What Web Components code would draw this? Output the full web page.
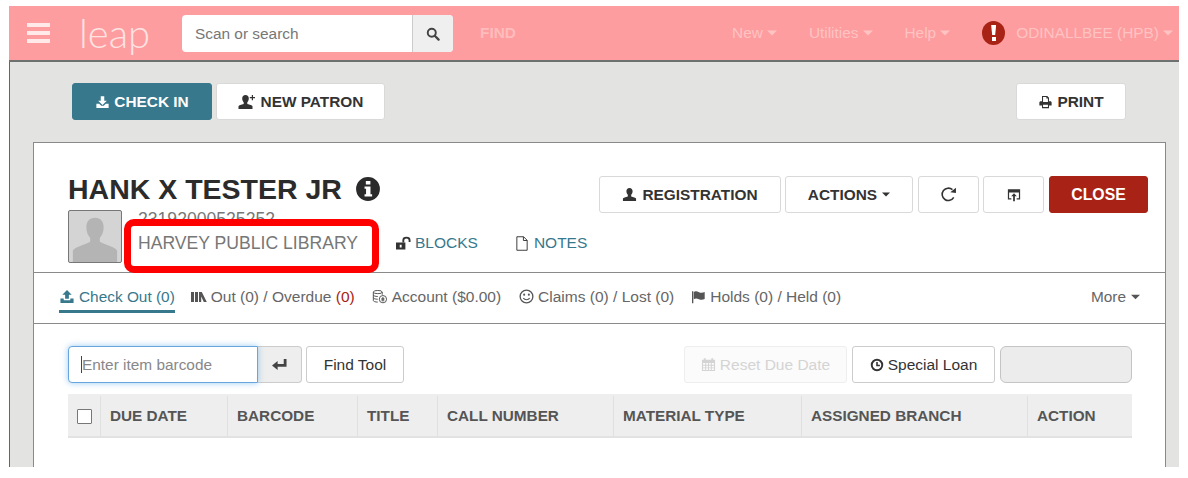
<!DOCTYPE html>
<html>
<head>
<meta charset="utf-8">
<title>leap</title>
<style>
  html, body { margin: 0; padding: 0; background: #fff; overflow: hidden; }
  body { font-family: "Liberation Sans", Arial, sans-serif; color: #333; }
</style>
</head>
<body>
<leap-app>
  <leap-navbar slot="nav"></leap-navbar>
  <leap-toolbar slot="toolbar"></leap-toolbar>
  <patron-card slot="card">
    <patron-header></patron-header>
    <patron-tabs></patron-tabs>
    <checkout-panel></checkout-panel>
  </patron-card>
</leap-app>

<script>
const ICONS = {
  search: '<svg viewBox="0 0 16 16"><circle cx="6.6" cy="6.6" r="4.6" fill="none" stroke="currentColor" stroke-width="2.2"/><path d="M10 10l4.4 4.4" stroke="currentColor" stroke-width="2.6" stroke-linecap="round"/></svg>',
  download: '<svg viewBox="0 0 16 16"><path fill="currentColor" d="M6 1.5h4v5h3L8 11.3 3 6.5h3z"/><path fill="currentColor" d="M1 10h3.2L6.6 12.400h2.800L11.800 10H15v4.800H1z"/></svg>',
  upload: '<svg viewBox="0 0 16 16"><path fill="currentColor" d="M8 1l5 5h-3v4.500H6V6H3z"/><path fill="currentColor" d="M1 10h3.500v2h7v-2H15v5H1z"/></svg>',
  user: '<svg viewBox="0 0 16 16"><path fill="currentColor" d="M8 1c2.100 0 3.300 1.500 3.300 3.500 0 1.500-.6 2.900-1.500 3.700v1.800c2.300.7 5 1.200 5.200 2.300V15H1v-2.700c.2-1.100 2.900-1.600 5.200-2.300V8.200C5.300 7.400 4.700 6 4.700 4.500 4.700 2.500 5.900 1 8 1z"/></svg>',
  userplus: '<svg viewBox="0 0 18 16"><path fill="currentColor" d="M7.500 1c2.100 0 3.300 1.500 3.300 3.500 0 1.500-.6 2.900-1.500 3.700v1.800c2.300.7 5 1.200 5.200 2.300V15H.5v-2.700c.2-1.100 2.900-1.600 5.200-2.300V8.200C4.800 7.400 4.200 6 4.200 4.500 4.200 2.500 5.400 1 7.500 1z"/><path fill="currentColor" d="M13.800 1h1.200v2h2v1.200h-2v2h-1.200v-2h-2V3h2z"/></svg>',
  print: '<svg viewBox="0 0 16 16"><path fill="currentColor" fill-rule="evenodd" d="M4 1h6l2 2v4h1.500c.8 0 1.500.7 1.500 1.500V12h-3v3H4v-3H1V8.500C1 7.700 1.700 7 2.500 7H4zM5.200 2.200V8h5.600V4H9V2.200zM5.200 11v2.800h5.600V11z"/></svg>',
  info: '<svg viewBox="0 0 24 24"><path fill="currentColor" fill-rule="evenodd" d="M12 1a11 11 0 1 1 0 22 11 11 0 0 1 0-22zM10 4.500v3.300h4.200V4.500zM8.800 9.800v2h1.400v5.100H8.800V19h7v-2.100h-1.500V9.800z"/></svg>',
  lockopen: '<svg viewBox="0 0 16 14"><path fill="currentColor" fill-rule="evenodd" d="M0 6.500h10V14H0zM4 8.800v3h2v-3z"/><path fill="none" stroke="currentColor" stroke-width="2" d="M7.800 6.500V4c0-3.600 6.700-3.600 6.700 0v2"/></svg>',
  file: '<svg viewBox="0 0 14 16"><path fill="none" stroke="currentColor" stroke-width="1" d="M1.500.8h7.200l3.800 3.800v10.600h-11zM8.500 .8v4h4"/></svg>',
  books: '<svg viewBox="0 0 16 12"><path fill="currentColor" d="M0 1h3v10H0zM4 1h3v10H4zM8 1h2.800l5 10h-3l-2.600-5.500V11H8z"/></svg>',
  coins: '<svg viewBox="0 0 18 16"><g fill="none" stroke="currentColor" stroke-width="1.100"><ellipse cx="6.500" cy="3" rx="5" ry="1.800"/><path d="M1.500 3v9.500c0 1 2.200 1.800 5 1.800M11.500 3v3M1.500 6.200c0 1 2.200 1.800 5 1.800M1.500 9.300c0 1 2.200 1.800 5 1.800"/><circle cx="12.300" cy="11" r="4.100"/></g><path fill="currentColor" d="M11.700 8.500h1.200v5h-1.200zM10.500 10h3.400v1h-3.400zM10.500 11.500h3.400v1h-3.400z"/></svg>',
  smile: '<svg viewBox="0 0 16 16"><circle cx="8" cy="8" r="6.800" fill="none" stroke="currentColor" stroke-width="1.400"/><circle cx="5.500" cy="6" r="1.100" fill="currentColor"/><circle cx="10.500" cy="6" r="1.100" fill="currentColor"/><path d="M4.600 9.800c1.600 2.200 5.200 2.200 6.800 0" fill="none" stroke="currentColor" stroke-width="1.300"/></svg>',
  flag: '<svg viewBox="0 0 18 16"><path fill="currentColor" d="M1 1.500h1.500V15H1z"/><path fill="currentColor" d="M3 2.300c2-1.400 4-.6 6 .2s4 1 6.500-.2v8c-2.500 1.200-4.500 1-6.500.2s-4-1.300-6 0z"/></svg>',
  calendar: '<svg viewBox="0 0 16 16"><path fill="currentColor" fill-rule="evenodd" d="M1 3h2V1.200h2V3h6V1.200h2V3h2v12H1zM2.200 6.500v1.800h2.300V6.500zM5.500 6.500v1.800h2V6.500zM8.500 6.500v1.800h2V6.500zM11.500 6.500v1.800h2.300V6.500zM2.200 9.300v1.800h2.300V9.300zM5.500 9.300v1.800h2V9.300zM8.500 9.300v1.800h2V9.300zM11.500 9.300v1.800h2.300V9.300zM2.200 12.100v1.700h2.300v-1.700zM5.500 12.100v1.700h2v-1.700zM8.500 12.100v1.700h2v-1.700zM11.500 12.100v1.700h2.300v-1.700z"/></svg>',
  clock: '<svg viewBox="0 0 16 16"><circle cx="8" cy="8" r="6" fill="none" stroke="currentColor" stroke-width="2.200"/><path d="M8 4.500V8.500H11.300" fill="none" stroke="currentColor" stroke-width="1.800"/></svg>',
  enter: '<svg viewBox="0 0 18 16"><path fill="currentColor" d="M13.500 2h3v8.500H7v3.300L1 9l6-4.800v3.300h6.500z"/></svg>',
  refresh: '<svg viewBox="0 0 16 16"><path fill="none" stroke="currentColor" stroke-width="1.500" d="M12.900 10.700A5.800 5.800 0 1 1 11.700 3.500"/><path fill="currentColor" d="M9.700 5.800L15 1.600v5z"/></svg>',
  popout: '<svg viewBox="0 0 16 16"><path fill="currentColor" fill-rule="evenodd" d="M1 1.500h14V13h-4v-1.400h2.600V5H2.400v6.600H5V13H1z"/><path fill="currentColor" d="M8 6l3.200 3.300H9V15H7V9.300H4.800z"/></svg>',
  caret: '<svg viewBox="0 0 10 6"><path fill="currentColor" d="M0 .5h10L5 5.500z"/></svg>'
};

customElements.define("leap-icon", class extends HTMLElement {
  connectedCallback() {
    if (!this.shadowRoot) {
      this.attachShadow({ mode: "open" });
      const w = this.getAttribute("w") || 14;
      const h = this.getAttribute("h") || 14;
      this.shadowRoot.innerHTML = `
        <style>
          :host { display: inline-flex; width: ${w}px; height: ${h}px; flex: none; }
          svg { display: block; width: 100%; height: 100%; }
        </style>
        ${ICONS[this.getAttribute("name")] || ""}
      `;
    }
  }
});

customElements.define("leap-btn", class extends HTMLElement {
  constructor() {
    super();
    this.attachShadow({ mode: "open" });
    this.shadowRoot.innerHTML = `
      <style>
        :host {
          display: inline-flex; align-items: center; justify-content: center; gap: 4px;
          box-sizing: border-box; height: 37px; flex: none;
          background: #fff; border: 1px solid #d9d9d9; border-radius: 3px;
          color: #333; font-size: 15.400px; font-weight: bold; white-space: nowrap;
        }
        :host([variant=teal]) { background: #37788c; border-color: #37788c; color: #fff; }
        :host([variant=red]) { background: #a82315; border-color: #a82315; color: #fff; }
        :host([variant=plain]) { font-weight: normal; font-size: 15.500px; border-color: #ccc; }
        :host([variant=disabled]) { font-weight: normal; font-size: 15.500px; color: #d4d4d4; border-color: #eee; background: #fbfbfb; }
        :host([variant=blank]) { background: #ececec; border-color: #c4c4c4; border-radius: 6px; }
      </style>
      <slot></slot>
    `;
  }
});

customElements.define("leap-navbar", class extends HTMLElement {
  constructor() {
    super();
    this.attachShadow({ mode: "open" });
    this.shadowRoot.innerHTML = `
      <style>
        :host {
          display: flex; align-items: center; box-sizing: border-box; height: 56px;
          background: #fe9d9f; border-bottom: 2px solid #6f7070; color: #ffc3c3;
          font-size: 15.400px;
        }
        .burger { display: flex; flex-direction: column; gap: 4px; width: 23px; margin-left: 18px; }
        .burger i { display: block; height: 4px; background: #ffe9e9; }
        .logo { margin-left: 29px; width: 73px; font: 300 40px Lato, sans-serif; color: #ffe3e3; line-height: 40px; }
        .search { display: flex; height: 37px; margin: 1px 0 0 30px; width: 271px; background: #fff; border-radius: 4px; overflow: hidden; box-sizing: border-box; }
        .search .field { flex: 1; display: flex; align-items: center; padding-left: 13px; color: #777; font-size: 15.400px; }
        .search .go { width: 40px; background: #efefef; border-left: 1px solid #ccc; display: flex; align-items: center; justify-content: center; color: #444; }
        .find { margin-left: 27px; font-weight: bold; font-size: 15.400px; color: #ffbcbc; }
        .right { margin-left: auto; display: flex; align-items: center; padding-right: 6px; }
        .menu { display: flex; align-items: center; gap: 4px; margin-left: 32px; }
        .alert { width: 23px; height: 24px; border-radius: 50%; background: #a82315; position: relative; margin-left: 32px; margin-right: 11px; }
        .alert::before { content: ""; position: absolute; left: 9px; top: 4px; width: 5px; height: 10px; background: #fff; clip-path: polygon(0 0, 100% 0, 80% 100%, 20% 100%); }
        .alert::after { content: ""; position: absolute; left: 9.500px; top: 16px; width: 4px; height: 4px; background: #fff; }
        .user { display: flex; align-items: center; gap: 4px; }
      </style>
      <div class="burger"><i></i><i></i><i></i></div>
      <div class="logo">leap</div>
      <div class="search">
        <div class="field">Scan or search</div>
        <div class="go"><leap-icon name="search" w="14" h="14"></leap-icon></div>
      </div>
      <div class="find">FIND</div>
      <div class="right">
        <div class="menu">New <leap-icon name="caret" w="10" h="6"></leap-icon></div>
        <div class="menu">Utilities <leap-icon name="caret" w="10" h="6"></leap-icon></div>
        <div class="menu">Help <leap-icon name="caret" w="10" h="6"></leap-icon></div>
        <div class="alert"></div>
        <div class="user">ODINALLBEE (HPB) <leap-icon name="caret" w="10" h="6"></leap-icon></div>
      </div>
    `;
  }
});

customElements.define("leap-toolbar", class extends HTMLElement {
  constructor() {
    super();
    this.attachShadow({ mode: "open" });
    this.shadowRoot.innerHTML = `
      <style>
        :host { display: flex; box-sizing: border-box; height: 80px; padding: 21px 53px 0 62px; gap: 4px; }
        .push { margin-left: auto; }
      </style>
      <leap-btn variant="teal" style="width:140px"><leap-icon name="download" w="15" h="14"></leap-icon>CHECK IN</leap-btn>
      <leap-btn style="width:169px;gap:5px"><leap-icon name="userplus" w="18" h="16"></leap-icon>NEW PATRON</leap-btn>
      <leap-btn class="push" style="width:110px"><leap-icon name="print" w="15" h="14"></leap-icon>PRINT</leap-btn>
    `;
  }
});

customElements.define("leap-app", class extends HTMLElement {
  constructor() {
    super();
    this.attachShadow({ mode: "open" });
    this.shadowRoot.innerHTML = `
      <style>
        :host { display: block; margin: 6px 9px 11px; width: 1170px; height: 461px; background: #e3e3e1; overflow: hidden; }
        main { border-left: 1px solid #47707c; height: 405px; box-sizing: border-box; }
        .card { margin: 0 13px 0 23px; }
      </style>
      <slot name="nav"></slot>
      <main>
        <slot name="toolbar"></slot>
        <div class="card"><slot name="card"></slot></div>
      </main>
    `;
  }
});

customElements.define("patron-card", class extends HTMLElement {
  constructor() {
    super();
    this.attachShadow({ mode: "open" });
    this.shadowRoot.innerHTML = `
      <style>
        :host { display: block; box-sizing: border-box; height: 340px; background: #fff; border: 1px solid #8a8a8a; }
      </style>
      <slot></slot>
    `;
  }
});

customElements.define("patron-header", class extends HTMLElement {
  constructor() {
    super();
    this.attachShadow({ mode: "open" });
    this.shadowRoot.innerHTML = `
      <style>
        :host { display: flex; box-sizing: border-box; height: 130px; padding: 32px 17px 0 34px; position: relative; border-bottom: 1px solid #8a8a8a; }
        .left { flex: 1; }
        .name { display: flex; align-items: center; gap: 13px; font-size: 28.500px; font-weight: bold; line-height: 28px; color: #2b2b2b; }
        .row { display: flex; margin-top: 7px; }
        .avatar { width: 54px; height: 53px; box-sizing: border-box; border: 1px solid #777; border-radius: 2px; background: #d4d4d4; flex: none; color: #b4b4b4; overflow: hidden; }
        .avatar svg { display: block; width: 100%; height: 100%; }
        .meta { margin-left: 16px; font-size: 17.600px; color: #777; width: 258px; flex: none; }
        .num { line-height: 18px; height: 18px; }
        .links { display: flex; gap: 37px; font-size: 15.500px; color: #37788c; padding-top: 24px; height: 18px; }
        .links span { display: flex; align-items: center; gap: 4px; }
        .links .notes { gap: 5px; }
        .links leap-icon { color: #333; }
        .actions { display: flex; gap: 4px; margin-top: 1px; height: 37px; }
        .actions .wide { margin-left: 1px; }
        .mark { position: absolute; left: 90px; top: 76px; width: 255px; height: 54px; box-sizing: border-box; border: 7px solid #ff0000; border-radius: 10px; background: #fff; padding: 7px 0 0 7px; font-size: 17.600px; color: #777; line-height: 20px; white-space: nowrap; }
      </style>
      <div class="left">
        <div class="name">HANK X TESTER JR <leap-icon name="info" w="26" h="26"></leap-icon></div>
        <div class="row">
          <div class="avatar"><svg viewBox="0 0 54 53"><path fill="currentColor" d="M27 7c6 0 9 4 9 10 0 5-2 9-4 11v4c5 3 15 5 18 9v12H4V41c3-4 13-6 18-9v-4c-2-2-4-6-4-11 0-6 3-10 9-10z"/></svg></div>
          <div class="meta"><div class="num">23192000525252</div></div>
          <div class="links">
            <span><leap-icon name="lockopen" w="15" h="14"></leap-icon>BLOCKS</span>
            <span class="notes"><leap-icon name="file" w="14" h="15"></leap-icon>NOTES</span>
          </div>
        </div>
      </div>
      <div class="actions">
        <leap-btn style="width:182px;gap:5px"><leap-icon name="user" w="15" h="15"></leap-icon>REGISTRATION</leap-btn>
        <leap-btn style="width:128px;gap:5px">ACTIONS <leap-icon name="caret" w="8" h="5"></leap-icon></leap-btn>
        <leap-btn class="wide" style="width:61px"><leap-icon name="refresh" w="17" h="17"></leap-icon></leap-btn>
        <leap-btn style="width:61px"><leap-icon name="popout" w="14" h="14"></leap-icon></leap-btn>
        <leap-btn class="wide" variant="red" style="width:99px;font-size:15.800px">CLOSE</leap-btn>
      </div>
      <div class="mark">HARVEY PUBLIC LIBRARY</div>
    `;
  }
});

customElements.define("patron-tabs", class extends HTMLElement {
  constructor() {
    super();
    this.attachShadow({ mode: "open" });
    this.shadowRoot.innerHTML = `
      <style>
        :host { display: flex; box-sizing: border-box; height: 51px; padding: 0 25px; gap: 17px; border-bottom: 1px solid #8a8a8a; font-size: 15.500px; color: #666; }
        .tab { display: flex; align-items: center; gap: 4px; height: 40px; padding-top: 7px; box-sizing: border-box; white-space: nowrap; }
        .tab leap-icon { color: #555; }
        .active { color: #37788c; border-bottom: 3px solid #37788c; padding-top: 10px; font-size: 15.400px; }
        .active leap-icon { color: #37788c; }
        .red { color: #a82315; }
        .more { margin-left: auto; gap: 5px; font-size: 15.400px; }
      </style>
      <div class="tab active"><leap-icon name="upload" w="16" h="15"></leap-icon>Check Out (0)</div>
      <div class="tab" style="margin-left:-1px"><leap-icon name="books" w="16" h="12"></leap-icon><span>Out (0) / Overdue <span class="red">(0)</span></span></div>
      <div class="tab"><leap-icon name="coins" w="16" h="15"></leap-icon>Account ($0.00)</div>
      <div class="tab" style="margin-left:1px"><leap-icon name="smile" w="15" h="15"></leap-icon>Claims (0) / Lost (0)</div>
      <div class="tab" style="gap:3px"><leap-icon name="flag" w="16" h="14"></leap-icon>Holds (0) / Held (0)</div>
      <div class="tab more">More <leap-icon name="caret" w="9" h="6"></leap-icon></div>
    `;
  }
});

customElements.define("checkout-panel", class extends HTMLElement {
  constructor() {
    super();
    this.attachShadow({ mode: "open" });
    const cols = [
      ["DUE DATE", 127], ["BARCODE", 130], ["TITLE", 80], ["CALL NUMBER", 176],
      ["MATERIAL TYPE", 188], ["ASSIGNED BRANCH", 226], ["ACTION", 105]
    ];
    this.shadowRoot.innerHTML = `
      <style>
        :host { display: block; padding: 22px 33px 0 34px; }
        .controls { display: flex; height: 37px; }
        .input { width: 190px; box-sizing: border-box; border: 1px solid #66a6dc; border-radius: 4px 0 0 4px; box-shadow: 0 0 6px rgba(102,175,233,.65); display: flex; align-items: center; padding-left: 12px; font-size: 15.400px; color: #888; background: #fff; position: relative; z-index: 1; }
        .caret { width: 1px; height: 17px; background: #444; }
        .addon { width: 44px; box-sizing: border-box; margin-right: 4px; border: 1px solid #ccc; border-left: 0; border-radius: 0 4px 4px 0; background: #eee; display: flex; align-items: center; justify-content: center; color: #444; }
        .gap { margin-left: auto; }
        .controls leap-btn + leap-btn { margin-left: 5px; }
        .thead { display: flex; height: 44px; margin-top: 11px; padding-top: 2px; background: #eee; border-bottom: 2px solid #e2e2e2; box-sizing: border-box; font-size: 15.300px; font-weight: bold; color: #555; }
        .th { display: flex; align-items: center; box-sizing: border-box; padding-left: 9px; border-left: 1px solid #e0e0e0; white-space: nowrap; }
        .check { width: 32px; display: flex; align-items: center; justify-content: center; flex: none; }
        .box { width: 13px; height: 13px; border: 1.500px solid #777; background: #fff; border-radius: 1px; }
      </style>
      <div class="controls">
        <div class="input"><span class="caret"></span>Enter item barcode</div>
        <div class="addon"><leap-icon name="enter" w="17" h="15"></leap-icon></div>
        <leap-btn variant="plain" style="width:98px">Find Tool</leap-btn>
        <span class="gap"></span>
        <leap-btn variant="disabled" style="width:163px"><leap-icon name="calendar" w="15" h="15"></leap-icon>Reset Due Date</leap-btn>
        <leap-btn variant="plain" style="width:143px"><leap-icon name="clock" w="14" h="14"></leap-icon>Special Loan</leap-btn>
        <leap-btn variant="blank" style="width:132px"></leap-btn>
      </div>
      <div class="thead">
        <div class="check"><div class="box"></div></div>
        ${cols.map(c => `<div class="th" style="width:${c[1]}px">${c[0]}</div>`).join("")}
      </div>
    `;
  }
});
</script>
</body>
</html>
